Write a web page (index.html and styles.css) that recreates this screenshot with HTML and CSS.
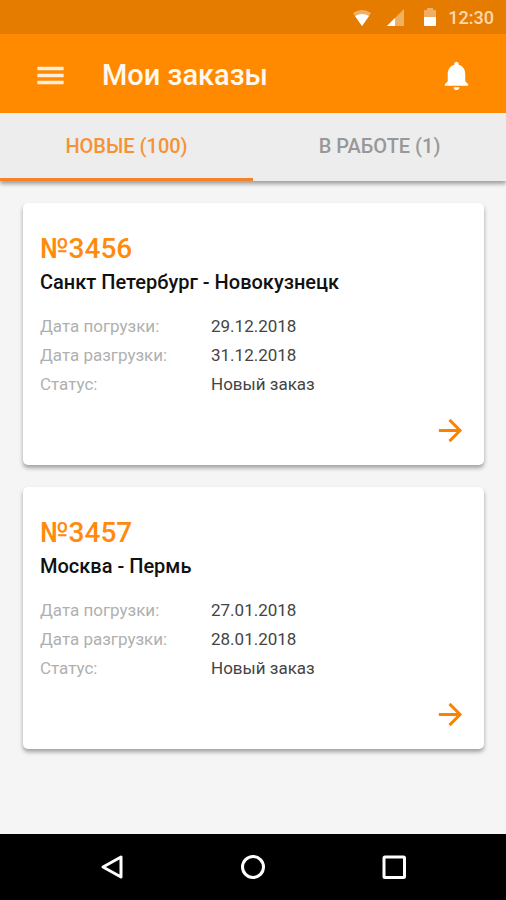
FILE: index.html
```html
<!DOCTYPE html>
<html lang="ru">
<head>
<meta charset="utf-8">
<meta name="viewport" content="width=device-width, initial-scale=1">
<title>Мои заказы</title>
<link rel="stylesheet" href="styles.css">
</head>
<body>
<div class="statusbar">
  <div class="status-icons">
    <svg width="20" height="20" viewBox="0 0 20 20" aria-hidden="true">
      <path fill="#fff" fill-opacity=".4" d="M1 5Q10-1 19 5L10 18Z"/>
      <path fill="#fff" d="M3 8Q10 4 17 8L10 18Z"/>
    </svg>
    <svg width="20" height="20" viewBox="0 0 20 20" aria-hidden="true">
      <path fill="#fff" fill-opacity=".4" d="M1 18L18 1V18Z"/>
      <path fill="#fff" d="M1 18L9 10V18Z"/>
    </svg>
    <svg width="20" height="20" viewBox="0 0 20 20" aria-hidden="true">
      <path fill="#fff" fill-opacity=".4" d="M4 9V3Q4 2 5 2H7V0H13V2H15Q16 2 16 3V9Z"/>
      <path fill="#fff" d="M4 9H16V17Q16 18 15 18H5Q4 18 4 17Z"/>
    </svg>
  </div>
  <span class="clock">12:30</span>
</div>

<header class="appbar">
  <button class="icon-button" type="button" aria-label="Меню">
    <svg width="35" height="35" viewBox="0 0 24 24" aria-hidden="true"><path fill="#ffeedd" d="M3 18h18v-2.4H3V18zm0-4.8h18v-2.4H3v2.4zM3 6v2.4h18V6H3z"/></svg>
  </button>
  <h1 class="title">Мои заказы</h1>
  <button class="icon-button" type="button" aria-label="Уведомления">
    <svg width="35" height="35" viewBox="0 0 24 24" aria-hidden="true"><path fill="#fff" d="M12 22c1.100 0 2-.9 2-2h-4c0 1.100.9 2 2 2zm6-6v-5c0-3.070-1.640-5.640-4.500-6.320V4c0-.83-.67-1.500-1.500-1.500s-1.500.67-1.500 1.500v.68C7.630 5.360 6 7.920 6 11v5l-2 2v1h16v-1l-2-2z"/></svg>
  </button>
</header>

<nav class="tabs">
  <a class="tab tab-active" href="#new" aria-current="page">НОВЫЕ (100)</a>
  <a class="tab" href="#active">В РАБОТЕ (1)</a>
</nav>

<main class="orders">
  <article class="card">
    <h2 class="number">№3456</h2>
    <p class="route">Санкт Петербург - Новокузнецк</p>
    <dl class="details">
      <dt>Дата погрузки:</dt><dd>29.12.2018</dd>
      <dt>Дата разгрузки:</dt><dd>31.12.2018</dd>
      <dt>Статус:</dt><dd>Новый заказ</dd>
    </dl>
    <a class="open" href="#3456" aria-label="Открыть заказ №3456">
      <svg width="35" height="35" viewBox="0 0 24 24" aria-hidden="true"><path fill="#fb8200" d="M12 4l-1.410 1.410L16.170 11H4v2h12.170l-5.580 5.590L12 20l8-8z"/></svg>
    </a>
  </article>
  <article class="card">
    <h2 class="number">№3457</h2>
    <p class="route">Москва - Пермь</p>
    <dl class="details">
      <dt>Дата погрузки:</dt><dd>27.01.2018</dd>
      <dt>Дата разгрузки:</dt><dd>28.01.2018</dd>
      <dt>Статус:</dt><dd>Новый заказ</dd>
    </dl>
    <a class="open" href="#3457" aria-label="Открыть заказ №3457">
      <svg width="35" height="35" viewBox="0 0 24 24" aria-hidden="true"><path fill="#fb8200" d="M12 4l-1.410 1.410L16.170 11H4v2h12.170l-5.580 5.590L12 20l8-8z"/></svg>
    </a>
  </article>
</main>

<footer class="navbar">
  <button class="nav-button" type="button" aria-label="Назад">
    <svg width="28" height="28" viewBox="0 0 28 28" aria-hidden="true"><path fill="none" stroke="#fff" stroke-width="3" stroke-linejoin="round" d="M5 14L23 4V24Z"/></svg>
  </button>
  <button class="nav-button" type="button" aria-label="Домой">
    <svg width="28" height="28" viewBox="0 0 28 28" aria-hidden="true"><circle cx="14" cy="14" r="10.500" fill="none" stroke="#fff" stroke-width="3"/></svg>
  </button>
  <button class="nav-button" type="button" aria-label="Обзор">
    <svg width="28" height="28" viewBox="0 0 28 28" aria-hidden="true"><rect x="4" y="4" width="20.500" height="20.500" rx="1" fill="none" stroke="#fff" stroke-width="3"/></svg>
  </button>
</footer>
</body>
</html>
```
FILE: styles.css
```css
* {
  box-sizing: border-box;
}

body {
  margin: 0;
  min-height: 100vh;
  display: flex;
  flex-direction: column;
  background: #f5f5f5;
  color: #111;
  font-family: Roboto, "Liberation Sans", sans-serif;
}

h1, h2, p, dl, dd {
  margin: 0;
}

button {
  border: 0;
  padding: 0;
  background: none;
}

a {
  text-decoration: none;
}

svg {
  display: block;
}

.statusbar {
  height: 34px;
  padding: 2px 12px 0;
  display: flex;
  align-items: center;
  justify-content: flex-end;
  gap: 8px;
  background: #e57c00;
}

.status-icons {
  display: flex;
  gap: 14px;
}

.clock {
  color: #ffd9ae;
  font-size: 18px;
  font-weight: 500;
  line-height: 24px;
}

.appbar {
  height: 79px;
  padding: 3px 32px 0 33px;
  display: flex;
  align-items: center;
  background: #ff8a00;
}

.title {
  flex: 1;
  padding-left: 34px;
  color: #fff8ee;
  font-size: 29px;
  font-weight: 500;
  line-height: 36px;
}

.tabs {
  position: relative;
  height: 68px;
  display: flex;
  background: #ededed;
  box-shadow: 0 3px 4px rgba(0, 0, 0, .35);
}

.tab {
  flex: 1;
  display: flex;
  align-items: center;
  justify-content: center;
  border-bottom: 3px solid transparent;
  color: #989898;
  font-size: 20px;
  font-weight: 500;
}

.tab-active {
  border-color: #f5822a;
  color: #f59237;
}

.orders {
  flex: 1;
  padding: 22px 22px 22px 23px;
  display: flex;
  flex-direction: column;
  gap: 22px;
}

.card {
  padding: 28px 16px 17px 17px;
  display: flex;
  flex-direction: column;
  background: #fff;
  border-radius: 5px;
  box-shadow: 0 3px 4px rgba(0, 0, 0, .35);
}

.number {
  color: #ff8a0c;
  font-size: 28px;
  font-weight: 500;
  line-height: 36px;
}

.route {
  padding-top: 1px;
  font-size: 20px;
  font-weight: 500;
  line-height: 28px;
}

.details {
  padding-top: 16px;
  display: grid;
  grid-template-columns: 171px 1fr;
  font-size: 17px;
  line-height: 29px;
}

.details dt {
  color: #b0b0b0;
}

.details dd {
  color: #444;
}

.open {
  align-self: flex-end;
  margin-top: 14px;
}

.navbar {
  height: 66px;
  display: flex;
  align-items: center;
  justify-content: center;
  gap: 113px;
  background: #000;
}
```
